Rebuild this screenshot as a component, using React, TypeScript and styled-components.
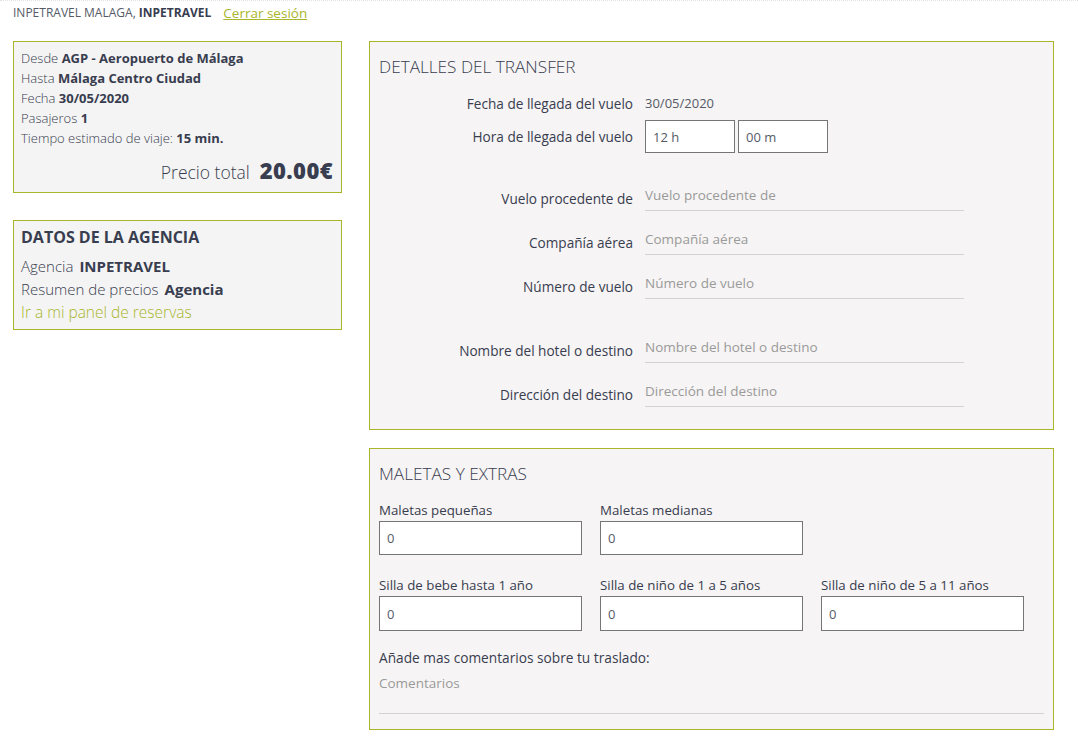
import React from "react";
import styled, { createGlobalStyle } from "styled-components";

const Global = createGlobalStyle`
  html, body { margin: 0; padding: 0; background: #ffffff; }
  body { font-family: "Open Sans", "Noto Sans", sans-serif; color: #383d4f; }
  * { box-sizing: border-box; }
`;

const OLIVE = "#a9b52b";
const INK = "#383d4f";

const Page = styled.div`
  width: 1078px;
  min-height: 744px;
  border-top: 1px dotted #e2e2e2;
  padding: 0 24px 0 13px;
`;

const TopBar = styled.div`
  height: 23px;
  display: flex;
  align-items: center;
  gap: 12px;
  font-size: 12px;
  color: #555a66;
  margin-bottom: 17px;
  b { color: ${INK}; font-weight: 700; }
`;

const TopLink = styled.a`
  color: ${OLIVE};
  text-decoration: underline;
  font-size: 13.5px;
  cursor: pointer;
`;

const Columns = styled.div`
  display: flex;
  align-items: flex-start;
  gap: 27px;
`;

const LeftCol = styled.div`
  width: 329px;
  display: flex;
  flex-direction: column;
  gap: 27px;
`;

const RightCol = styled.div`
  width: 685px;
  display: flex;
  flex-direction: column;
  gap: 18px;
`;

const Card = styled.div<{ $tint?: string }>`
  border: 1px solid ${OLIVE};
  background: ${(p) => p.$tint || "#f4f4f4"};
`;

const SummaryCard = styled(Card)`
  padding: 6px 8px 7px 7px;
`;

const InfoLine = styled.div`
  font-size: 13px;
  line-height: 20px;
  font-weight: 300;
  color: ${INK};
  b { font-weight: 700; }
`;

const PriceRow = styled.div`
  display: flex;
  justify-content: flex-end;
  align-items: baseline;
  gap: 10px;
  margin-top: 9px;
  line-height: 26px;
`;

const PriceLabel = styled.span`
  font-size: 17.5px;
  font-weight: 300;
  color: ${INK};
`;

const PriceValue = styled.span`
  font-size: 22px;
  font-weight: 800;
  letter-spacing: 0.4px;
  color: ${INK};
`;

const AgencyCard = styled(Card)`
  padding: 5px 8px 5px 7px;
`;

const AgencyTitle = styled.div`
  font-size: 16px;
  font-weight: 700;
  line-height: 22px;
  color: ${INK};
  margin-bottom: 7px;
`;

const AgencyLine = styled.div`
  font-size: 15px;
  line-height: 23px;
  font-weight: 300;
  color: ${INK};
  b { font-weight: 700; margin-left: 6px; }
`;

const AgencyLink = styled.a`
  display: block;
  font-size: 15.5px;
  line-height: 23px;
  font-weight: 300;
  color: ${OLIVE};
  text-decoration: none;
`;

const FormCard = styled(Card)<{ $bottom?: number }>`
  padding: 12px 9px ${(p) => p.$bottom ?? 22}px 9px;
`;

const CardTitle = styled.h2`
  margin: 0;
  font-size: 17.2px;
  font-weight: 300;
  line-height: 25px;
  color: ${INK};
`;

const FieldRows = styled.div`
  display: flex;
  flex-direction: column;
  margin-top: 12px;
`;

const Row = styled.div<{ $top?: number; $h?: number }>`
  display: grid;
  grid-template-columns: 254px 319px;
  column-gap: 12px;
  align-items: center;
  height: ${(p) => p.$h ?? 30}px;
  margin-top: ${(p) => p.$top ?? 0}px;
`;

const Label = styled.label<{ $drop?: number }>`
  text-align: right;
  font-size: 13.6px;
  font-weight: 500;
  color: ${INK};
  padding-top: ${(p) => p.$drop ?? 0}px;
  white-space: nowrap;
`;

const StaticValue = styled.span`
  font-size: 13px;
  color: #555a66;
`;

const TimeGroup = styled.div`
  display: flex;
  gap: 3px;
`;

const BoxInput = styled.input<{ $w?: number; $h?: number }>`
  width: ${(p) => (p.$w ? `${p.$w}px` : "100%")};
  height: ${(p) => p.$h ?? 34}px;
  border: 1px solid #757575;
  background: #ffffff;
  padding: 0 7px;
  font-family: inherit;
  font-size: 13px;
  color: #555a66;
  outline: none;
  &::placeholder { color: #777; }
`;

const LineInput = styled.input`
  width: 100%;
  height: 30px;
  border: none;
  border-bottom: 1px solid #d2d2d2;
  background: transparent;
  padding: 0 0 2px 0;
  font-family: inherit;
  font-size: 13.5px;
  color: ${INK};
  outline: none;
  &::placeholder { color: #9a9a9a; }
`;

const ExtrasGrid = styled.div`
  display: grid;
  grid-template-columns: 203px 203px 203px;
  column-gap: 18px;
  row-gap: 21px;
  margin-top: 15px;
`;

const ExtraField = styled.div`
  display: flex;
  flex-direction: column;
  gap: 2px;
`;

const ExtraLabel = styled.label`
  font-size: 13.3px;
  font-weight: 500;
  line-height: 18px;
  color: ${INK};
  white-space: nowrap;
`;

const CommentLabel = styled(ExtraLabel)`
  display: block;
  margin-top: 18px;
  font-size: 13.7px;
`;

const CommentArea = styled.textarea`
  display: block;
  width: 665px;
  height: 46px;
  margin-top: 1px;
  border: none;
  border-bottom: 1px solid #d2d2d2;
  background: transparent;
  padding: 6px 0 0 0;
  resize: none;
  font-family: inherit;
  font-size: 13.5px;
  color: ${INK};
  outline: none;
  &::placeholder { color: #9a9a9a; }
`;

const Spacer = styled.div`
  grid-column: 3;
`;

export default function App() {
  return (
    <>
      <Global />
      <Page>
        <TopBar>
          <span>
            INPETRAVEL MALAGA, <b>INPETRAVEL</b>
          </span>
          <TopLink>Cerrar sesión</TopLink>
        </TopBar>
        <Columns>
          <LeftCol>
            <SummaryCard>
              <InfoLine>
                Desde <b>AGP - Aeropuerto de Málaga</b>
              </InfoLine>
              <InfoLine>
                Hasta <b>Málaga Centro Ciudad</b>
              </InfoLine>
              <InfoLine>
                Fecha <b>30/05/2020</b>
              </InfoLine>
              <InfoLine>
                Pasajeros <b>1</b>
              </InfoLine>
              <InfoLine>
                Tiempo estimado de viaje: <b>15 min.</b>
              </InfoLine>
              <PriceRow>
                <PriceLabel>Precio total</PriceLabel>
                <PriceValue>20.00€</PriceValue>
              </PriceRow>
            </SummaryCard>
            <AgencyCard>
              <AgencyTitle>DATOS DE LA AGENCIA</AgencyTitle>
              <AgencyLine>
                Agencia<b>INPETRAVEL</b>
              </AgencyLine>
              <AgencyLine>
                Resumen de precios<b>Agencia</b>
              </AgencyLine>
              <AgencyLink>Ir a mi panel de reservas</AgencyLink>
            </AgencyCard>
          </LeftCol>
          <RightCol>
            <FormCard $tint="#f6f4f4">
              <CardTitle>DETALLES DEL TRANSFER</CardTitle>
              <FieldRows>
                <Row $h={24}>
                  <Label>Fecha de llegada del vuelo</Label>
                  <StaticValue>30/05/2020</StaticValue>
                </Row>
                <Row $h={33} $top={5}>
                  <Label>Hora de llegada del vuelo</Label>
                  <TimeGroup>
                    <BoxInput $w={90} $h={33} defaultValue="12 h" />
                    <BoxInput $w={90} $h={33} defaultValue="00 m" />
                  </TimeGroup>
                </Row>
                <Row $top={28}>
                  <Label $drop={4}>Vuelo procedente de</Label>
                  <LineInput placeholder="Vuelo procedente de" />
                </Row>
                <Row $top={14}>
                  <Label $drop={4}>Compañía aérea</Label>
                  <LineInput placeholder="Compañía aérea" />
                </Row>
                <Row $top={14}>
                  <Label $drop={4}>Número de vuelo</Label>
                  <LineInput placeholder="Número de vuelo" />
                </Row>
                <Row $top={34}>
                  <Label $drop={4}>Nombre del hotel o destino</Label>
                  <LineInput placeholder="Nombre del hotel o destino" />
                </Row>
                <Row $top={14}>
                  <Label $drop={4}>Dirección del destino</Label>
                  <LineInput placeholder="Dirección del destino" />
                </Row>
              </FieldRows>
            </FormCard>
            <FormCard $tint="#f6f4f4" $bottom={15}>
              <CardTitle>MALETAS Y EXTRAS</CardTitle>
              <ExtrasGrid>
                <ExtraField>
                  <ExtraLabel>Maletas pequeñas</ExtraLabel>
                  <BoxInput defaultValue="0" />
                </ExtraField>
                <ExtraField>
                  <ExtraLabel>Maletas medianas</ExtraLabel>
                  <BoxInput defaultValue="0" />
                </ExtraField>
                <Spacer />
                <ExtraField>
                  <ExtraLabel>Silla de bebe hasta 1 año</ExtraLabel>
                  <BoxInput $h={35} defaultValue="0" />
                </ExtraField>
                <ExtraField>
                  <ExtraLabel>Silla de niño de 1 a 5 años</ExtraLabel>
                  <BoxInput $h={35} defaultValue="0" />
                </ExtraField>
                <ExtraField>
                  <ExtraLabel>Silla de niño de 5 a 11 años</ExtraLabel>
                  <BoxInput $h={35} defaultValue="0" />
                </ExtraField>
              </ExtrasGrid>
              <CommentLabel>Añade mas comentarios sobre tu traslado:</CommentLabel>
              <CommentArea placeholder="Comentarios" />
            </FormCard>
          </RightCol>
        </Columns>
      </Page>
    </>
  );
}
